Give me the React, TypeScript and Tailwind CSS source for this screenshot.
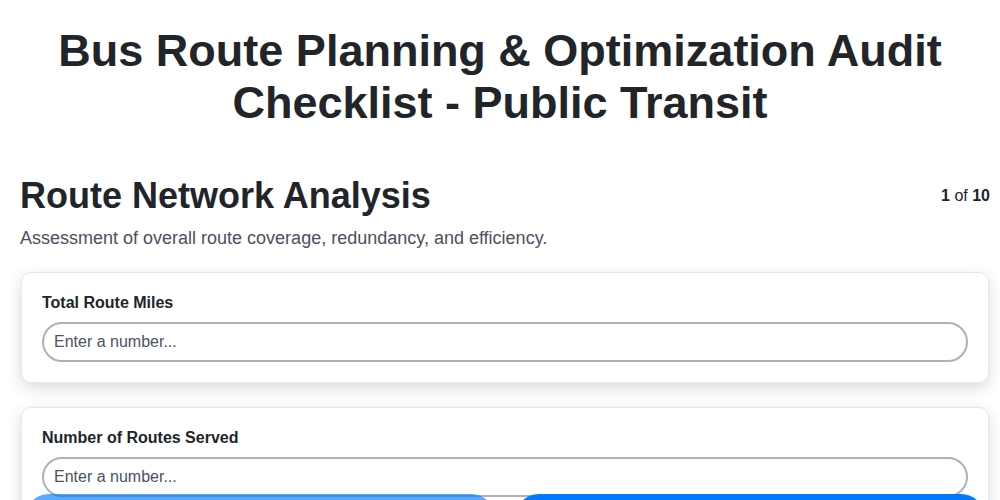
import React from "react";

function Field({ label }: { label: string }) {
  return (
    <div className="bg-white border border-[#e6e7ec] rounded-[10px] p-5 shadow-[0_5px_15px_rgba(0,0,0,0.15)]">
      <label className="block text-[16px] leading-[19px] font-bold text-[#212529] mb-[10px]">{label}</label>
      <input
        type="text"
        placeholder="Enter a number..."
        className="block w-full h-[40px] rounded-full border-2 border-[#aab2ba] px-[10px] text-[16px] text-[#212529] placeholder:text-[#4b5263] outline-none bg-white"
      />
    </div>
  );
}

export default function App() {
  return (
    <div className="min-h-screen bg-white text-[#212529]" style={{ fontFamily: '"Liberation Sans", Arial, sans-serif' }}>
      <h1 className="pt-[25px] text-center text-[45px] leading-[52px] font-bold text-[#212529]">
        Bus Route Planning &amp; Optimization Audit Checklist - Public Transit
      </h1>
      <div className="pl-[21px] pr-[11px]">
        <div className="mt-[46px] flex items-center justify-between">
          <h2 className="text-[36px] leading-[42px] font-bold text-[#212529] -ml-px">Route Network Analysis</h2>
          <div className="text-[16px] text-[#212529] translate-x-px">
            <span className="font-bold">1</span> of <span className="font-bold">10</span>
          </div>
        </div>
        <p className="mt-[9px] text-[18px] leading-[25px] text-[#4a5060] -ml-px">
          Assessment of overall route coverage, redundancy, and efficiency.
        </p>
        <div className="mt-[21px] flex flex-col gap-[24px] pb-24">
          <Field label="Total Route Miles" />
          <Field label="Number of Routes Served" />
          <Field label="Average Route Length" />
        </div>
      </div>
      <div className="fixed left-0 right-0 top-[494px] pl-[25px] pr-[15px] flex gap-5">
        <button className="flex-1 h-[48px] rounded-full bg-[#007bff] opacity-65 text-white font-bold text-[16px]">Previous</button>
        <button className="flex-1 h-[48px] rounded-full bg-[#007bff] text-white font-bold text-[16px]">Next</button>
      </div>
    </div>
  );
}
